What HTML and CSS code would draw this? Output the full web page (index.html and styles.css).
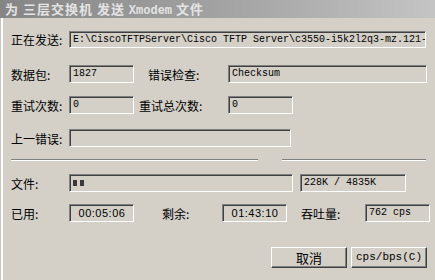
FILE: index.html
```html
<html>
    <head>
        <meta charset="utf-8">
        <title>Xmodem</title>
        <link rel="stylesheet" href="styles.css">
    </head>
    <body>
        <div class="window">
            <div class="titlebar">为 三层交换机 发送 <span class="mono">Xmodem</span> 文件</div>

            <div class="panel">
                <div class="row r1">
                    <div class="label">正在发送:</div>
                    <div class="field mono wide">E:\CiscoTFTPServer\Cisco TFTP Server\c3550-i5k2l2q3-mz.121-</div>
                </div>

                <div class="row r2">
                    <div class="label">数据包:</div>
                    <div class="field mono small">1827</div>
                    <div class="label lab-check">错误检查:</div>
                    <div class="field mono check">Checksum</div>
                </div>

                <div class="row r3">
                    <div class="label">重试次数:</div>
                    <div class="field mono small">0</div>
                    <div class="label lab-total">重试总次数:</div>
                    <div class="field mono small">0</div>
                </div>

                <div class="row r4">
                    <div class="label">上一错误:</div>
                    <div class="field lasterr"></div>
                </div>

                <div class="seps">
                    <div class="sep sep-a"></div>
                    <div class="sep sep-b"></div>
                </div>

                <div class="row r5">
                    <div class="label">文件:</div>
                    <div class="field progress">
                        <span class="block"></span>
                        <span class="block"></span>
                    </div>
                    <div class="field mono size">228K / 4835K</div>
                </div>

                <div class="row r6">
                    <div class="label">已用:</div>
                    <div class="field time small">00:05:06</div>
                    <div class="label lab-left">剩余:</div>
                    <div class="field time small">01:43:10</div>
                    <div class="label lab-rate">吞吐量:</div>
                    <div class="field mono small">762 cps</div>
                </div>

                <div class="buttons">
                    <button class="btn">取消</button>
                    <button class="btn mono">cps/bps(C)</button>
                </div>
            </div>
        </div>
    </body>
</html>
```

FILE: styles.css
```css
body {
    margin: 0;
    background-color: #d4d0c8;
    font-family: "Noto Sans CJK SC", "DejaVu Sans", sans-serif;
    font-size: 12px;
    color: #000;
}

.mono {
    font-family: "Liberation Mono", "Noto Sans CJK SC", monospace;
}

.window {
    width: 435px;
    height: 280px;
    overflow: hidden;
    box-shadow: inset 1px 0 #c8c4bc, inset 3px 0 #ffffff;
}

.titlebar {
    height: 18px;
    line-height: 18px;
    padding-left: 5px;
    background: linear-gradient(to right, #858585, #a8a8a8 60%, #c4c4c4);
    color: #e4e4e4;
    font-weight: bold;
    font-size: 13px;
    letter-spacing: 1px;
    white-space: nowrap;
}

.titlebar .mono {
    font-size: 12px;
    letter-spacing: 0;
}

.panel {
    padding-left: 11px;
}

.row {
    display: flex;
    align-items: center;
    height: 18px;
}

.r1 { margin-top: 13px; height: 17px; }
.r2 { margin-top: 17px; }
.r3 { margin-top: 13px; }
.r4 { margin-top: 15px; }
.r5 { margin-top: 0; }
.r6 { margin-top: 12px; }

.label {
    width: 58px;
    flex: none;
    white-space: nowrap;
}

.field {
    box-sizing: border-box;
    height: 100%;
    flex: none;
    border: 1px solid;
    border-color: #808080 #ffffff #ffffff #808080;
    box-shadow: inset 1px 1px #404040;
    padding: 0 2px 0 3px;
    font-size: 10px;
    line-height: 16px;
    white-space: nowrap;
    overflow: hidden;
}

.wide { width: 357px; }
.small { width: 65px; }
.check { width: 199px; }
.lasterr { width: 222px; }

.lab-check { margin-left: 14px; width: 80px; }
.lab-total { margin-left: 5px; width: 89px; }

.seps {
    display: flex;
    height: 2px;
    margin-top: 12px;
    margin-bottom: 13px;
}

.sep {
    height: 0;
    border-top: 1px solid #808080;
    border-bottom: 1px solid #ffffff;
}

.sep-a { width: 247px; }
.sep-b { width: 144px; margin-left: 24px; }

.progress {
    width: 224px;
    display: flex;
    align-items: center;
    gap: 3px;
    padding-left: 3px;
}

.block {
    width: 4px;
    height: 6px;
    background-color: #3a3a3a;
}

.size {
    width: 106px;
    margin-left: 7px;
}

.time {
    font-family: "Liberation Sans", sans-serif;
    font-size: 11px;
    text-align: center;
    letter-spacing: 0.5px;
}

.lab-left { margin-left: 28px; width: 60px; }
.lab-rate { margin-left: 14px; width: 64px; }

.buttons {
    display: flex;
    justify-content: flex-end;
    gap: 4px;
    margin-top: 25px;
    padding-right: 8px;
}

.btn {
    width: 76px;
    height: 21px;
    padding: 0;
    background-color: #d4d0c8;
    border: 1px solid;
    border-color: #ffffff #404040 #404040 #ffffff;
    box-shadow: inset -1px -1px #808080;
    font-family: "Noto Sans CJK SC", sans-serif;
    font-size: 13px;
    line-height: 17px;
    color: #000;
}

.btn.mono {
    font-family: "Liberation Mono", monospace;
    font-size: 11px;
}
```
